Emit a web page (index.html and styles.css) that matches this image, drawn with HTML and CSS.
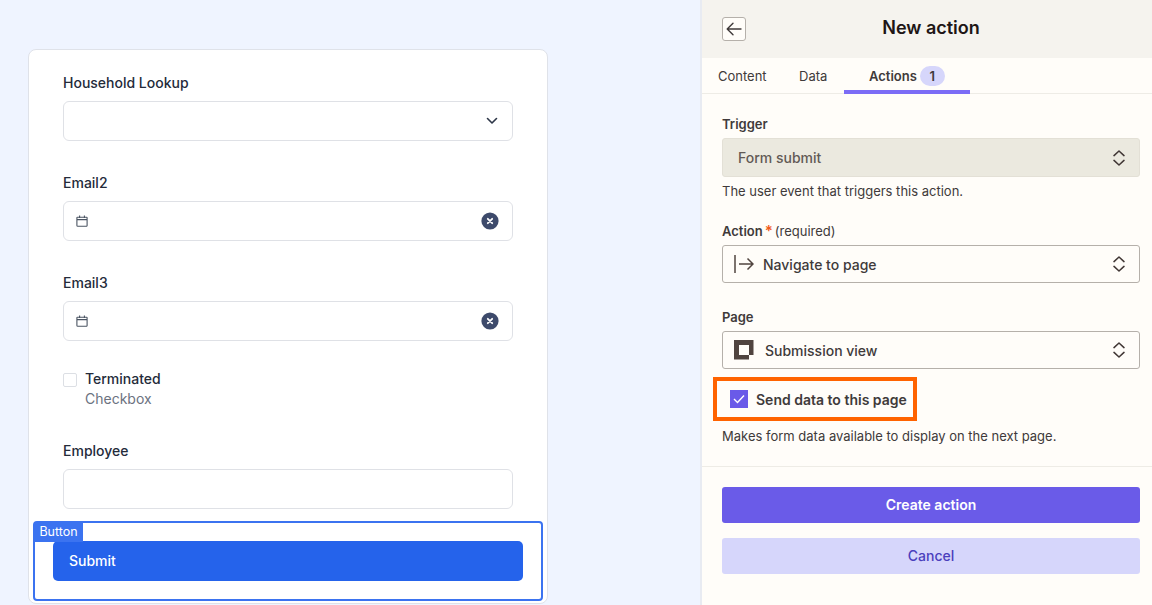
FILE: index.html
```html
<!DOCTYPE html>
<html lang="en">
<head>
<meta charset="utf-8">
<title>New action</title>
<link rel="stylesheet" href="styles.css">
</head>
<body>
<div class="page">
  <main class="canvas">
    <form class="card">
      <div class="field">
        <div class="label">Household Lookup</div>
        <div class="input input-end">
          <svg class="chev" width="12" height="8" viewBox="0 0 12 8"><path d="M1.5 1.5 6 6l4.5-4.5" fill="none" stroke="#2d3648" stroke-width="1.6" stroke-linecap="round" stroke-linejoin="round"/></svg>
        </div>
      </div>
      <div class="field">
        <div class="label">Email2</div>
        <div class="input input-split">
          <svg width="12" height="12" viewBox="0 0 12 12"><path d="M1.5 2.2h9a.6.6 0 0 1 .6.6v7.6a.9.9 0 0 1-.9.9H1.8a.9.9 0 0 1-.9-.9V2.8a.6.6 0 0 1 .6-.6ZM.9 4.6h10.2M3.6.6v2.4M8.4.6v2.4" fill="none" stroke="#4b5563" stroke-width="1.1"/></svg>
          <span class="clear"><svg width="18" height="18" viewBox="0 0 18 18"><circle cx="9" cy="9" r="8.6" fill="#3d4a6b"/><path d="M6.8 6.8l4.4 4.4M11.2 6.8l-4.4 4.4" stroke="#fff" stroke-width="1.8" stroke-linecap="round"/></svg></span>
        </div>
      </div>
      <div class="field">
        <div class="label">Email3</div>
        <div class="input input-split">
          <svg width="12" height="12" viewBox="0 0 12 12"><path d="M1.5 2.2h9a.6.6 0 0 1 .6.6v7.6a.9.9 0 0 1-.9.9H1.8a.9.9 0 0 1-.9-.9V2.8a.6.6 0 0 1 .6-.6ZM.9 4.6h10.2M3.6.6v2.4M8.4.6v2.4" fill="none" stroke="#4b5563" stroke-width="1.1"/></svg>
          <span class="clear"><svg width="18" height="18" viewBox="0 0 18 18"><circle cx="9" cy="9" r="8.6" fill="#3d4a6b"/><path d="M6.8 6.8l4.4 4.4M11.2 6.8l-4.4 4.4" stroke="#fff" stroke-width="1.8" stroke-linecap="round"/></svg></span>
        </div>
      </div>
      <div class="check-field">
        <span class="box"></span>
        <div>
          <div class="check-title">Terminated</div>
          <div class="check-sub">Checkbox</div>
        </div>
      </div>
      <div class="field employee">
        <div class="label">Employee</div>
        <div class="input"></div>
      </div>
      <div class="selected">
        <span class="tag">Button</span>
        <div class="submit">Submit</div>
      </div>
    </form>
  </main>
  <aside class="panel">
    <header class="head">
      <span class="back"><svg width="16" height="14" viewBox="0 0 16 14"><path d="M15 7H1.6M7 1.2 1.2 7 7 12.8" fill="none" stroke="#403a3a" stroke-width="1.4" stroke-linecap="round" stroke-linejoin="round"/></svg></span>
      <h1 class="title">New action</h1>
    </header>
    <nav class="tabs">
      <span class="tab t-content">Content</span>
      <span class="tab t-data">Data</span>
      <span class="tab t-actions">Actions <b class="badge">1</b></span>
    </nav>
    <section class="body">
      <div class="plabel">Trigger</div>
      <div class="select disabled"><span>Form submit</span>
        <svg class="updown" width="12" height="16" viewBox="0 0 12 16"><path d="M1 5.600 6 1l5 4.600M1 10.400 6 15l5-4.600" fill="none" stroke="#413735" stroke-width="1.500" stroke-linecap="round" stroke-linejoin="round"/></svg>
      </div>
      <p class="help">The user event that triggers this action.</p>
      <div class="plabel gap-action">Action<i class="star">*</i><span class="req">(required)</span></div>
      <div class="select">
        <svg class="lead" width="20" height="20" viewBox="0 0 20 20"><path d="M1 1v18" fill="none" stroke="#50443f" stroke-width="1.500"/><path d="M5 10h14M13.500 4.500 19 10l-5.500 5.500" fill="none" stroke="#50443f" stroke-width="1.500"/></svg>
        <span class="sel-a">Navigate to page</span>
        <svg class="updown" width="12" height="16" viewBox="0 0 12 16"><path d="M1 5.600 6 1l5 4.600M1 10.400 6 15l5-4.600" fill="none" stroke="#413735" stroke-width="1.500" stroke-linecap="round" stroke-linejoin="round"/></svg>
      </div>
      <div class="plabel gap-page">Page</div>
      <div class="select">
        <svg class="lead" width="20" height="20" viewBox="0 0 20 20"><path fill-rule="evenodd" d="M0 0h19.500v15h-4.500v4.500H0ZM5 5v10h10V5Z" fill="#50443f"/></svg>
        <span class="sel-b">Submission view</span>
        <svg class="updown" width="12" height="16" viewBox="0 0 12 16"><path d="M1 5.600 6 1l5 4.600M1 10.400 6 15l5-4.600" fill="none" stroke="#413735" stroke-width="1.500" stroke-linecap="round" stroke-linejoin="round"/></svg>
      </div>
      <div class="send">
        <span class="tick"><svg width="12" height="10" viewBox="0 0 12 10"><path d="M1 5l3.500 3.500L11 1.500" fill="none" stroke="#fff" stroke-width="1.400"/></svg></span>
        <span>Send data to this page</span>
      </div>
      <p class="help help-send">Makes form data available to display on the next page.</p>
    </section>
    <footer class="foot">
      <div class="btn primary">Create action</div>
      <div class="btn secondary">Cancel</div>
    </footer>
  </aside>
</div>
</body>
</html>
```
FILE: styles.css
```css
* { box-sizing: border-box; }
html, body { margin: 0; height: 100%; overflow: hidden; }
body { font-family: Inter, "Liberation Sans", sans-serif; color: #1f2937; }
.page { display: flex; width: 1152px; height: 605px; overflow: hidden; }

.canvas { width: 700px; flex: none; background: #eff4ff; padding: 49px 0 0 28px; }
.card { width: 520px; height: 555px; background: #fff; border: 1px solid #dfe2e9; border-radius: 8px; padding: 23px 34.5px 0 34px; position: relative; }
.field { height: 100px; }
.label { font-size: 14px; font-weight: 500; line-height: 20px; height: 28px; color: #242b3a; }
.input { height: 40px; border: 1px solid #dfe1e6; border-radius: 6px; background: #fff; display: flex; align-items: center; }
.input-end { justify-content: flex-end; padding-right: 13.500px; }
.input-split { justify-content: space-between; padding: 0 12.500px 0 12px; }
.clear { display: flex; }
.check-field { display: flex; gap: 8px; height: 100px; margin-top: -6px; }
.box { width: 14px; height: 14px; border: 1px solid #dcdfe4; border-radius: 2px; margin-top: 6px; flex: none; }
.check-title { font-size: 14px; font-weight: 500; line-height: 20px; margin-top: 2px; color: #242b3a; }
.check-sub { font-size: 14px; line-height: 20px; color: #6b7280; }
.employee { margin-top: -26px; }
.selected { position: absolute; left: 4px; top: 471px; width: 509.500px; height: 80px; border: 2px solid #3b73f0; border-radius: 4px; padding: 18px 18px 0; background: transparent; }
.tag { position: absolute; left: -1px; top: -1px; height: 20px; width: 49px; background: #3b73f0; color: #fff; font-size: 12.500px; line-height: 20px; text-align: center; border-radius: 2px 0 0 0; }
.submit { height: 40px; background: #2563eb; border-radius: 5px; color: #fff; font-size: 14px; font-weight: 500; line-height: 40px; padding-left: 16px; }

.panel { flex: 1; display: flex; flex-direction: column; background: #fffdf9; border-left: 2px solid #e8ebf2; color: #403a3a; }
.head { height: 58px; flex: none; background: #f5f3ee; display: flex; align-items: center; padding-left: 20px; }
.back { width: 24px; height: 24px; background: #fffdf9; border: 1px solid #b5b0aa; border-radius: 3px; display: flex; align-items: center; justify-content: center; }
.title { flex: 1; margin: 0 0 2px; padding-right: 36px; text-align: center; font-size: 18px; line-height: 24px; font-weight: 600; color: #201515; }
.tabs { height: 36px; flex: none; border-bottom: 1px solid #eeece6; display: flex; align-items: stretch; font-size: 13px; }
.tab { display: flex; align-items: center; padding-top: 1px; color: #403a3a; }
.t-content { margin-left: 16px; width: 81px; }
.t-data { width: 45px; }
.t-actions { width: 126px; margin-bottom: -1px; border-bottom: 4px solid #7b6cf6; padding: 4px 0 0 25px; font-weight: 600; gap: 3px; }
.badge { width: 25px; height: 20px; border-radius: 10px; background: #d6d6fb; font-size: 13px; font-weight: 600; line-height: 20px; text-align: center; }
.body { flex: 1; padding: 20px 12px 0 20px; border-bottom: 1px solid #eeece6; }
.plabel { font-size: 13px; font-weight: 600; line-height: 20px; height: 24px; color: #403a3a; }
.star { color: #f05a1a; font-style: normal; margin: 0 2px 0 2px; font-size: 15px; }
.req { font-weight: 400; }
.select { height: 38px; border: 1px solid #b5b0aa; border-radius: 3px; display: flex; align-items: center; padding: 0 14px 0 11px; font-size: 14px; font-weight: 500; color: #403a3a; }
.select.disabled { height: 39px; background: #ebe9df; border-color: #e3e0d6; padding-left: 15px; color: #625a55; }
.lead { flex: none; }
.sel-a { margin-left: 9px; }
.sel-b { margin-left: 11px; }
.updown { margin-left: auto; flex: none; }
.help { margin: 4px 0 0; font-size: 13px; line-height: 20px; }
.gap-action { margin-top: 20px; }
.gap-page { margin-top: 24px; }
.send { margin: 8px 0 0 -9px; width: 204px; height: 44px; border: 4px solid #ff6300; display: flex; align-items: center; gap: 8px; padding-left: 13px; font-size: 14px; font-weight: 600; }
.tick { width: 18px; height: 18px; background: #6a5ae8; display: flex; align-items: center; justify-content: center; }
.help-send { margin-top: 5px; }
.foot { flex: none; height: 138px; padding: 20px 12px 0 20px; display: flex; flex-direction: column; gap: 15px; }
.btn { height: 36px; border-radius: 3px; text-align: center; font-size: 14px; line-height: 36px; font-weight: 600; }
.primary { background: #6a5be8; color: #fff; }
.secondary { background: #d6d6fb; color: #4b3fbd; font-weight: 500; }
```
